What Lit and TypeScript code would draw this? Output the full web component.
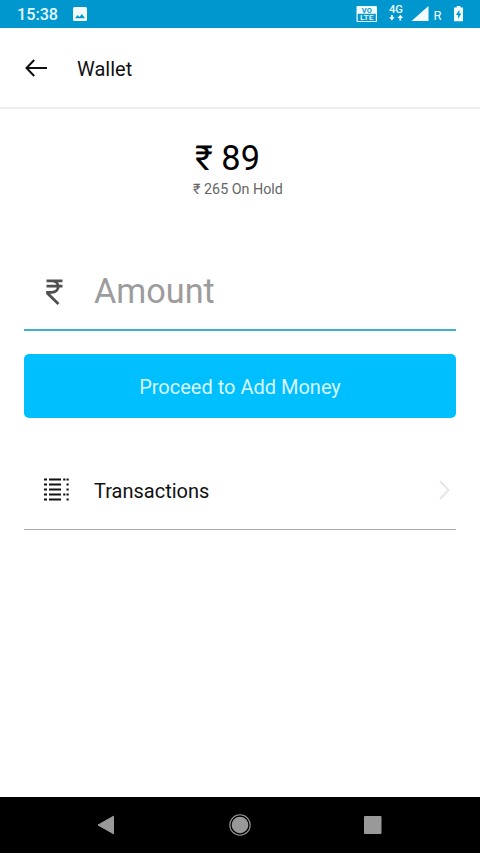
import { LitElement, html, css } from "lit";
import { customElement, property } from "lit/decorators.js";

@customElement("status-bar")
class StatusBar extends LitElement {
    static styles = css`
        :host {
            display: flex;
            align-items: center;
            justify-content: space-between;
            height: 28px;
            background: #0097cf;
            color: #e4f8ff;
            font-family: Roboto, sans-serif;
        }

        .left {
            display: flex;
            align-items: center;
            gap: 15px;
            padding-left: 17px;
        }

        .time {
            font-size: 16.2px;
            font-weight: 500;
            line-height: 28px;
            padding-top: 1px;
        }

        svg {
            display: block;
        }
    `

    render() {
        return html`
            <div class="left">
                <span class="time">15:38</span>
                <svg width="14" height="14" viewBox="0 0 14 14">
                    <path fill="#f2fcff" fill-rule="evenodd" d="M1.5 0h11Q14 0 14 1.500v11Q14 14 12.500 14h-11Q0 14 0 12.500v-11Q0 0 1.500 0zM2 11.300h10L8.900 7 6.400 10 4.700 8z" />
                </svg>
            </div>
            <svg width="124" height="28" viewBox="356 0 124 28" font-family="Roboto, sans-serif" fill="#f2fcff">
                <rect x="356.500" y="6" width="20.500" height="16" rx="1" />
                <rect x="357.700" y="13.800" width="18.100" height="7.200" fill="#0097cf" />
                <text x="361.800" y="12.700" font-size="7" font-weight="700" fill="#0097cf" textLength="10" lengthAdjust="spacingAndGlyphs">VO</text>
                <text x="360" y="20.400" font-size="8" font-weight="500" textLength="13.500" lengthAdjust="spacingAndGlyphs">LTE</text>
                <text x="389" y="13.300" font-size="10.500" font-weight="500" textLength="14" lengthAdjust="spacingAndGlyphs">4G</text>
                <path d="M391 15h1.800v2.300h1.900L391.900 20.500 389.100 17.300h1.900zM399.400 20.500h1.800v-2.500h1.900L400.300 14.800 397.500 18h1.900z" />
                <path d="M411.500 21L428.500 6v15z" />
                <text x="433.500" y="19.500" font-size="13">R</text>
                <path fill-rule="evenodd" d="M454 7.500h2.700V6h3.700v1.500h2.600v13.800h-9zM459.400 9.700L456 14.900h2.100v4L461.300 13.600h-1.900z" />
            </svg>
        `
    }
}

@customElement("app-header")
class AppHeader extends LitElement {
    @property() title = ""

    static styles = css`
        :host {
            display: flex;
            align-items: center;
            gap: 29px;
            height: 79px;
            padding: 0 25px;
            border-bottom: 2px solid #eeeeee;
            font-family: Roboto, sans-serif;
        }

        svg {
            display: block;
        }

        .title {
            font-size: 20px;
            color: #111;
            padding-top: 2px;
        }
    `

    render() {
        return html`
            <svg width="23" height="18" viewBox="0 0 23 18" fill="none" stroke="#111" stroke-width="2">
                <path d="M22 9H2M9.200 1L1.500 9L9.200 17" />
            </svg>
            <span class="title">${this.title}</span>
        `
    }
}

@customElement("menu-row")
class MenuRow extends LitElement {
    @property() label = ""

    static styles = css`
        :host {
            display: flex;
            align-items: center;
            box-sizing: border-box;
            height: 80px;
            padding: 0 6px 0 20px;
            border-bottom: 1px solid #aaaaaa;
            font-family: Roboto, sans-serif;
        }

        .label {
            flex: 1;
            margin-left: 25px;
            font-size: 20px;
            color: #111;
            padding-top: 2px;
        }

        svg {
            display: block;
        }
    `

    render() {
        return html`
            <svg width="25" height="24" viewBox="0 0 25 24" fill="none" stroke="#111" stroke-width="2.100">
                <path d="M0 1.500h3M0 6.500h3M0 11.500h3M0 16.500h3M0 21.500h3" />
                <path d="M5 1.500h12M5 6.500h12M5 11.500h12M5 16.500h12M5 21.500h12" />
                <path d="M19.200 1.500h2.200M22.500 1.500h2.200M22.500 6.500h2.200M22.500 11.500h2.200M19.200 16.500h2.200M22.500 16.500h2.200M22.500 21.500h2.200" />
            </svg>
            <span class="label">${this.label}</span>
            <svg width="11" height="20" viewBox="0 0 11 20" fill="none" stroke="#e6e6e6" stroke-width="2">
                <path d="M1 1L9.500 10L1 19" />
            </svg>
        `
    }
}

@customElement("nav-bar")
class NavBar extends LitElement {
    static styles = css`
        :host {
            display: flex;
            align-items: center;
            justify-content: space-between;
            box-sizing: border-box;
            height: 56px;
            padding: 0 98px 0 97px;
            background: #000;
        }

        svg {
            display: block;
        }
    `

    render() {
        return html`
            <svg width="18" height="20" viewBox="0 0 18 20">
                <path fill="#999" stroke="#999" stroke-linejoin="round" d="M1 10L16.500 1.200v17.600z" />
            </svg>
            <svg width="22" height="22" viewBox="0 0 22 22">
                <circle cx="11" cy="11" r="10.200" fill="none" stroke="#999" stroke-width="1.100" />
                <circle cx="11" cy="11" r="8.300" fill="#999" />
            </svg>
            <svg width="18" height="18" viewBox="0 0 18 18">
                <rect width="17.500" height="18" rx="1" fill="#999" />
            </svg>
        `
    }
}

@customElement("app-root")
class AppRoot extends LitElement {
    @property({ type: Number }) balance = 89
    @property({ type: Number }) onHold = 265

    static styles = css`
        :host {
            display: flex;
            flex-direction: column;
            height: 853px;
            background: #fff;
            font-family: Roboto, sans-serif;
        }

        main {
            flex: 1;
            display: flex;
            flex-direction: column;
            padding: 0 24px;
        }

        .summary {
            align-self: center;
            margin: 28px 4px 0 0;
        }

        .balance {
            font-size: 34.3px;
            line-height: 42px;
            color: #000;
            padding-left: 2px;
        }

        .hold {
            font-size: 14.3px;
            line-height: 20px;
            color: #666;
        }

        .amount {
            display: flex;
            align-items: center;
            box-sizing: border-box;
            height: 78px;
            margin-top: 54px;
            padding: 2px 0 0 22px;
            border-bottom: 2px solid #3fb0d0;
        }

        .amount svg {
            display: block;
        }

        .placeholder {
            margin-left: 31px;
            padding-bottom: 2px;
            font-size: 34.2px;
            line-height: 42px;
            color: #9c9c9c;
        }

        .proceed {
            height: 64px;
            margin-top: 23px;
            padding: 2px 0 0;
            border: 0;
            border-radius: 5px;
            background: #00bfff;
            color: #d8f7ff;
            font-family: inherit;
            font-size: 20px;
        }

        menu-row {
            margin-top: 32px;
        }
    `

    render() {
        return html`
            <status-bar></status-bar>
            <app-header title="Wallet"></app-header>
            <main>
                <div class="summary">
                    <div class="balance">₹ ${this.balance}</div>
                    <div class="hold">₹ ${this.onHold} On Hold</div>
                </div>
                <div class="amount">
                    <svg width="17" height="26" viewBox="0 0 17 26" fill="none" stroke="#505050" stroke-width="2.800">
                        <path d="M.5 1.900h16M.5 7.200h16M.5 1.900h5C14.500 1.900 14.500 13.300 5.500 13.300H1.500v1L12.500 25" />
                    </svg>
                    <span class="placeholder">Amount</span>
                </div>
                <button class="proceed">Proceed to Add Money</button>
                <menu-row label="Transactions"></menu-row>
            </main>
            <nav-bar></nav-bar>
        `
    }
}
